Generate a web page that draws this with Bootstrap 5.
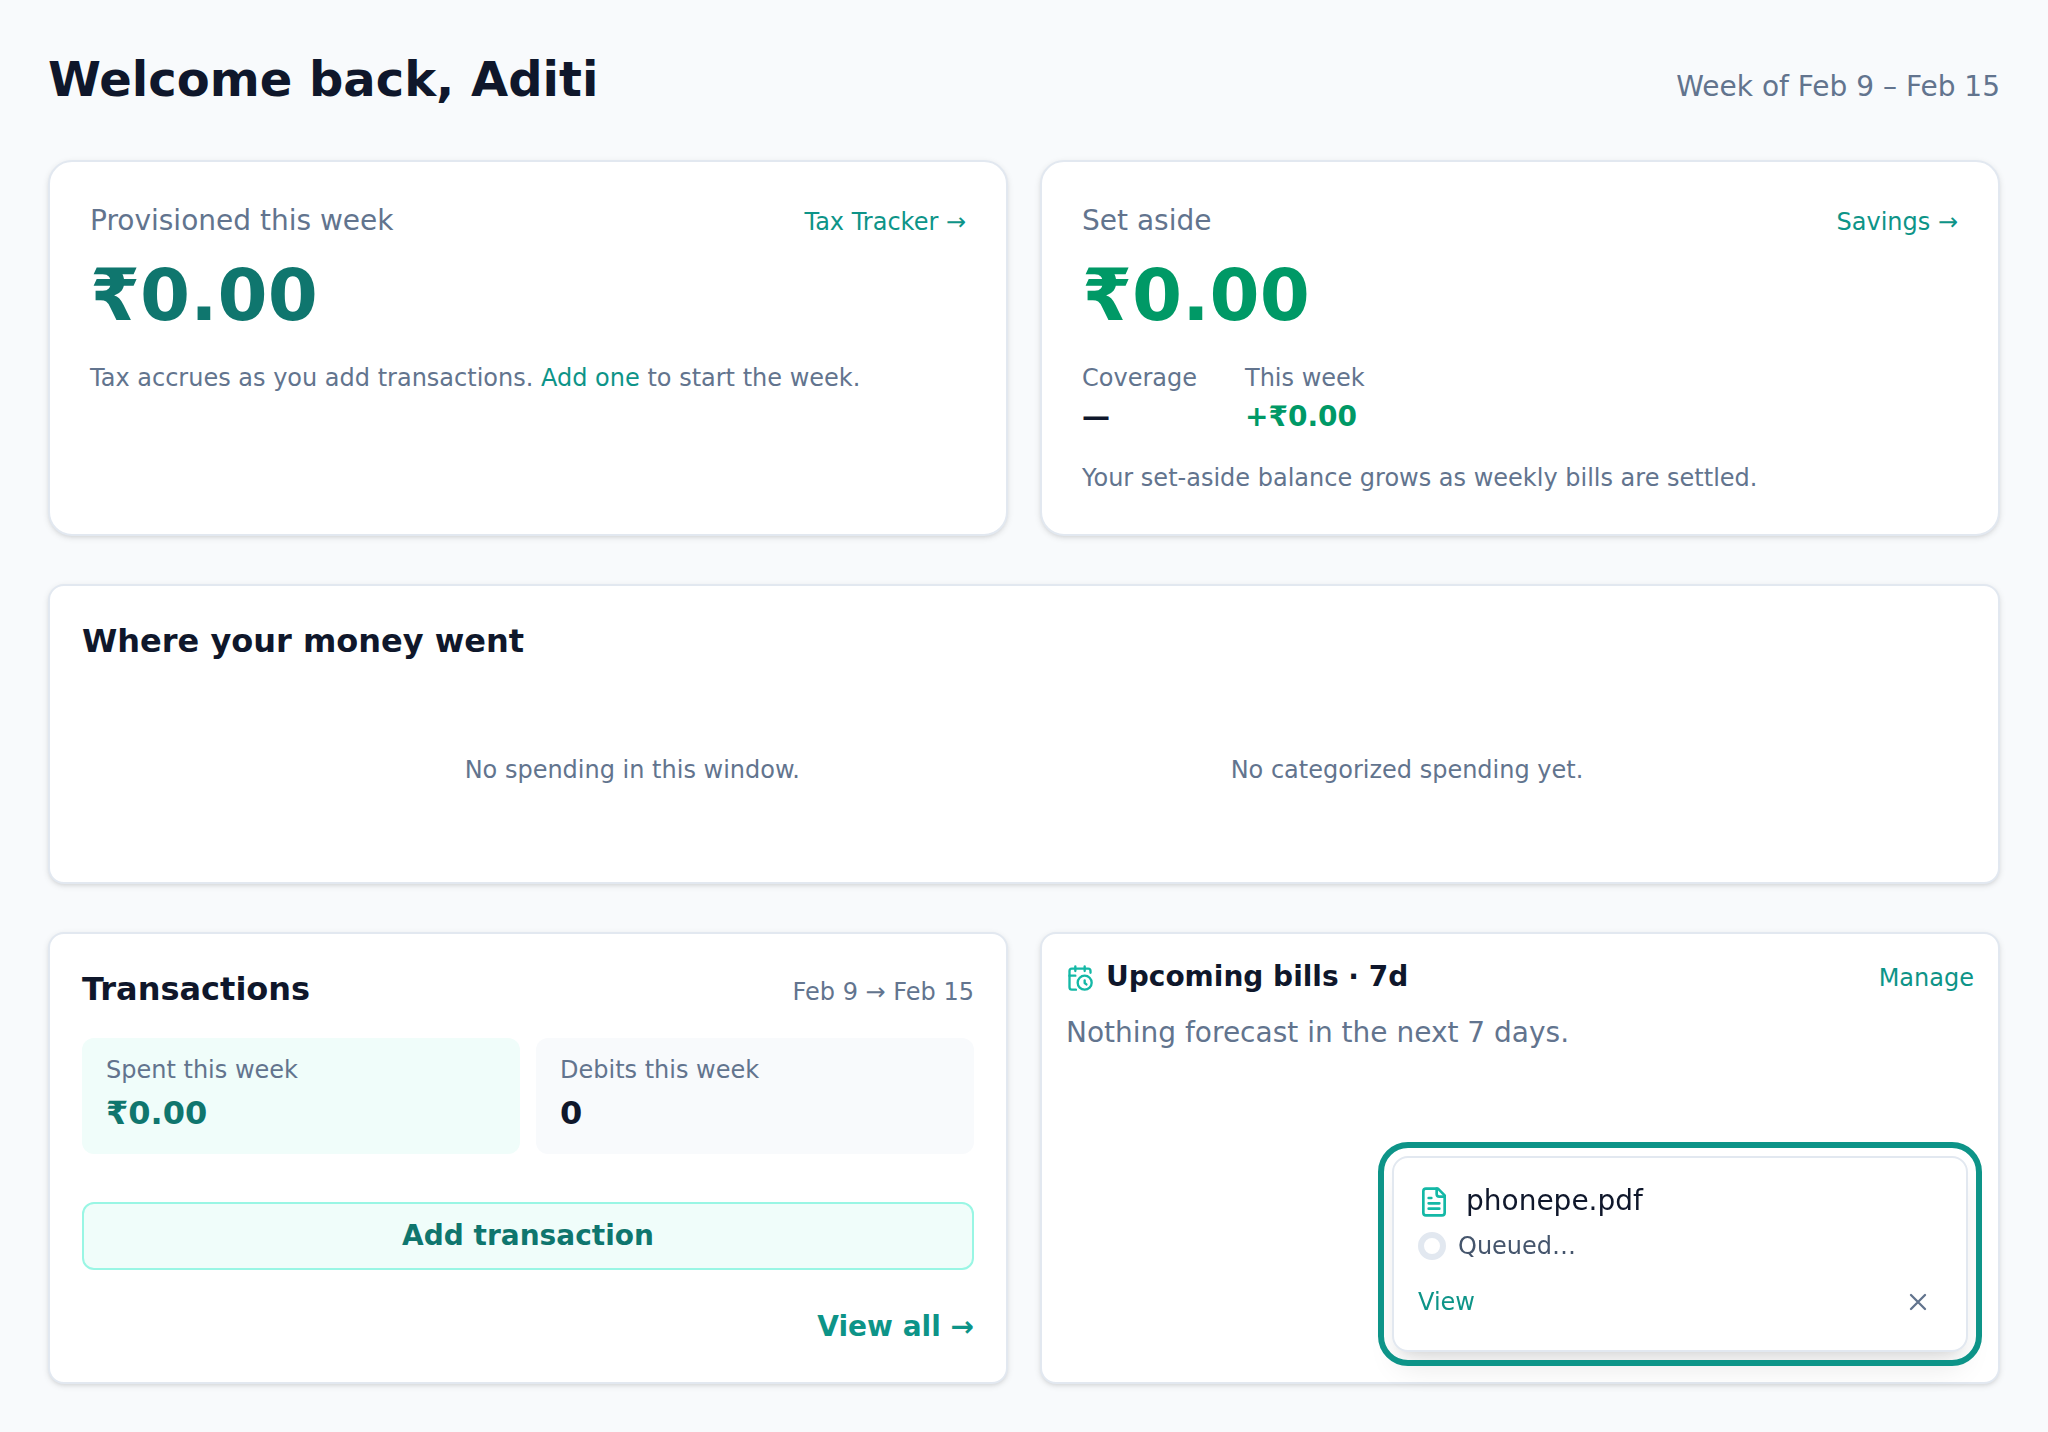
<!DOCTYPE html>
<html lang="en">
<head>
<meta charset="utf-8">
<meta name="viewport" content="width=device-width, initial-scale=1">
<title>Dashboard</title>
<link href="https://cdn.jsdelivr.net/npm/bootstrap@5.3.0/dist/css/bootstrap.min.css" rel="stylesheet">
<style>
:root { --ink: #0f172b; --muted: #62748e; --line: #e2e8f0; --teal: #0d9488; --teal-dark: #0f766e; --icon: #14b8a6; --green: #009966; }
body { background: #f8fafc; color: var(--ink); font-family: "DejaVu Sans", sans-serif; font-size: 24px; line-height: 32px; }
a { color: var(--teal); text-decoration: none; }
a:hover { color: var(--teal-dark); }
.page { padding: 48px; gap: 48px; }
.tiles { --bs-gutter-x: 32px; --bs-gutter-y: 32px; }
h1 { font-size: 48px; line-height: 62px; padding-bottom: 2px; }
.text-md { font-size: 28px; line-height: 38px; padding-bottom: 2px; }
.text-lg { font-size: 32px; line-height: 46px; padding-bottom: 2px; }
.amount { font-size: 72px; line-height: 90px; margin: 8px 0 22px; }
.muted { color: var(--muted); }
.c-teal { color: var(--teal-dark); }
.c-green { color: var(--green); }
.panel { --bs-card-border-color: var(--line); --bs-card-border-width: 2px; --bs-card-border-radius: 16px; --bs-card-color: var(--ink); box-shadow: 0 2px 6px rgba(0,0,0,.1), 0 2px 4px -2px rgba(0,0,0,.1); padding: 32px; }
.panel-hero { --bs-card-border-radius: 24px; padding: 40px; }
.panel-compact { padding: 24px; }
.facts { gap: 48px; margin-bottom: 24px; }
.facts dd, .stat dd { margin: 4px 0 0; }
dt { font-weight: 400; }
.charts { gap: 48px; min-height: 160px; margin-top: 24px; }
.stats { gap: 16px; margin: 24px 0 48px; }
.stat { padding: 16px 24px; border-radius: 12px; background: #f8fafc; }
.stat-accent { background: #f0fdfa; }
.btn-add { --bs-btn-color: var(--teal-dark); --bs-btn-bg: #f0fdfa; --bs-btn-border-color: #99f6e4; --bs-btn-border-width: 2px; --bs-btn-border-radius: 12px; --bs-btn-font-size: 28px; --bs-btn-line-height: 40px; --bs-btn-padding-y: 12px; --bs-btn-hover-bg: #ccfbf1; --bs-btn-hover-color: var(--teal-dark); --bs-btn-hover-border-color: #99f6e4; --bs-btn-font-weight: 700; }
.view-all { font-size: 28px; line-height: 46px; margin-top: 34px; }
.ico { fill: none; stroke: currentColor; stroke-width: 2; stroke-linecap: round; stroke-linejoin: round; flex-shrink: 0; color: var(--icon); width: 28px; height: 28px; }
.ico-file { width: 32px; height: 32px; }
.upload { right: 80px; bottom: 80px; width: 576px; max-width: calc(100% - 160px); padding: 24px; background: #fff; border: 2px solid var(--line); border-radius: 16px; outline: 6px solid var(--teal); outline-offset: 8px; box-shadow: 0 20px 30px -6px rgba(0,0,0,.1), 0 8px 12px -8px rgba(0,0,0,.1); }
.ring { width: 28px; height: 28px; border: 6px solid var(--line); border-radius: 50%; }
.btn-dismiss { --bs-btn-padding-x: 8px; --bs-btn-padding-y: 8px; --bs-btn-line-height: 1; width: 48px; height: 48px; }
.btn-dismiss .ico { color: var(--muted); }
.gap-12 { gap: 12px; }
.status { color: #45556c; margin: 8px 0 16px; }
</style>
</head>
<body>
<main class="page d-flex flex-column">
  <header class="d-flex justify-content-between align-items-baseline">
    <h1 class="fw-bold mb-0">Welcome back, Aditi</h1>
    <span class="text-md muted">Week of Feb 9 – Feb 15</span>
  </header>

  <div class="row row-cols-1 row-cols-lg-2 tiles mt-0">
    <section class="col mt-0">
      <div class="card panel panel-hero h-100">
        <div class="d-flex justify-content-between align-items-baseline">
          <span class="text-md muted">Provisioned this week</span>
          <a href="#tax">Tax Tracker →</a>
        </div>
        <div class="amount fw-bold c-teal">₹0.00</div>
        <p class="m-0 muted">Tax accrues as you add transactions. <a href="#add">Add one</a> to start the week.</p>
      </div>
    </section>
    <section class="col mt-0">
      <div class="card panel panel-hero h-100">
        <div class="d-flex justify-content-between align-items-baseline">
          <span class="text-md muted">Set aside</span>
          <a href="#savings">Savings →</a>
        </div>
        <div class="amount fw-bold c-green">₹0.00</div>
        <div class="facts d-flex">
          <dl class="m-0">
            <dt class="muted">Coverage</dt>
            <dd class="text-md fw-bold">—</dd>
          </dl>
          <dl class="m-0">
            <dt class="muted">This week</dt>
            <dd class="text-md fw-bold c-green">+₹0.00</dd>
          </dl>
        </div>
        <p class="m-0 muted">Your set-aside balance grows as weekly bills are settled.</p>
      </div>
    </section>
  </div>

  <section class="card panel">
    <h2 class="text-lg fw-bold m-0">Where your money went</h2>
    <div class="charts d-flex flex-wrap justify-content-evenly align-items-center muted">
      <span>No spending in this window.</span>
      <span>No categorized spending yet.</span>
    </div>
  </section>

  <div class="row row-cols-1 row-cols-lg-2 tiles mt-0">
    <section class="col mt-0">
      <div class="card panel h-100">
        <div class="d-flex justify-content-between align-items-baseline">
          <h2 class="text-lg fw-bold m-0">Transactions</h2>
          <span class="muted">Feb 9 → Feb 15</span>
        </div>
        <div class="stats d-flex">
          <dl class="stat stat-accent flex-fill w-50 mb-0">
            <dt class="muted">Spent this week</dt>
            <dd class="text-lg fw-bold c-teal">₹0.00</dd>
          </dl>
          <dl class="stat flex-fill w-50 mb-0">
            <dt class="muted">Debits this week</dt>
            <dd class="text-lg fw-bold">0</dd>
          </dl>
        </div>
        <button type="button" class="btn btn-add w-100">Add transaction</button>
        <a href="#all" class="view-all fw-bold align-self-end">View all →</a>
      </div>
    </section>
    <section class="col mt-0">
      <div class="card panel panel-compact h-100">
        <div class="d-flex justify-content-between align-items-center mb-3">
          <div class="d-flex align-items-center gap-12">
            <svg class="ico" viewBox="0 0 24 24" aria-hidden="true"><path d="M21 7.500V6a2 2 0 0 0-2-2H5a2 2 0 0 0-2 2v14a2 2 0 0 0 2 2h3.500"/><path d="M16 2v4M8 2v4M3 10h5"/><path d="M17.500 17.500 16 16.300V14"/><circle cx="16" cy="16" r="6"/></svg>
            <h2 class="text-md fw-bold m-0">Upcoming bills · 7d</h2>
          </div>
          <a href="#bills">Manage</a>
        </div>
        <p class="text-md muted m-0">Nothing forecast in the next 7 days.</p>
      </div>
    </section>
  </div>
</main>

<aside class="upload position-fixed" aria-label="Upload status">
  <div class="d-flex align-items-center gap-3">
    <svg class="ico ico-file" viewBox="0 0 24 24" aria-hidden="true"><path d="M15 2H6a2 2 0 0 0-2 2v16a2 2 0 0 0 2 2h12a2 2 0 0 0 2-2V7Z"/><path d="M14 2v4a2 2 0 0 0 2 2h4M10 9H8M16 13H8M16 17H8"/></svg>
    <span class="text-md">phonepe.pdf</span>
  </div>
  <div class="status d-flex align-items-center gap-12">
    <span class="ring"></span>
    <span>Queued…</span>
  </div>
  <div class="d-flex justify-content-between align-items-center">
    <a href="#view">View</a>
    <button type="button" class="btn btn-dismiss d-flex align-items-center justify-content-center" aria-label="Dismiss"><svg class="ico" viewBox="0 0 24 24" aria-hidden="true"><path d="M18 6 6 18M6 6l12 12"/></svg></button>
  </div>
</aside>
<script src="https://cdn.jsdelivr.net/npm/bootstrap@5.3.0/dist/js/bootstrap.bundle.min.js"></script>
</body>
</html>
